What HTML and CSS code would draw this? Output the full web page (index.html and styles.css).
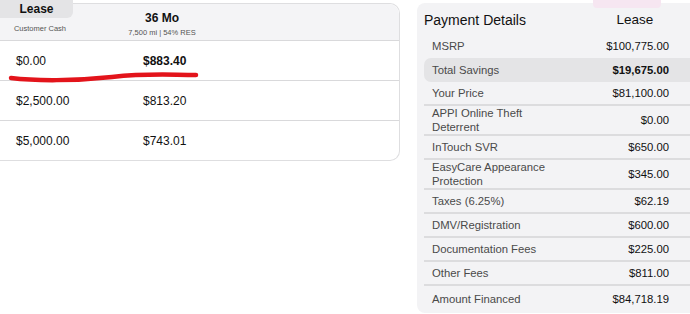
FILE: index.html
```html
<!DOCTYPE html>
<html lang="en">
<head>
    <meta charset="UTF-8">
    <meta name="viewport" content="width=device-width, initial-scale=1.0">
    <title>Lease Payment</title>
    <link rel="stylesheet" href="styles.css">
</head>
<body>
    <div class="page">
        <div class="lease-card">
            <div class="lease-head">
                <div class="head-cash">
                    <div class="tab">Lease</div>
                    <div class="sub">Customer Cash</div>
                </div>
                <div class="head-term">
                    <div class="term">36 Mo</div>
                    <div class="sub">7,500 mi | 54% RES</div>
                </div>
            </div>
            <div class="lease-row">
                <span class="cash">$0.00</span>
                <span class="pay bold">$883.40</span>
            </div>
            <div class="lease-row">
                <span class="cash">$2,500.00</span>
                <span class="pay">$813.20</span>
            </div>
            <div class="lease-row">
                <span class="cash">$5,000.00</span>
                <span class="pay">$743.01</span>
            </div>
            <svg class="scribble" width="210" height="90" viewBox="0 0 210 90">
                <path d="M11 77 C 35 80, 75 80, 112 76 S 170 74, 196 74" fill="none" stroke="#e3141b" stroke-width="4.5" stroke-linecap="round"/>
            </svg>
        </div>

        <div class="details">
            <div class="pink-tag"></div>
            <div class="details-head">
                <span class="title">Payment Details</span>
                <span class="col-title">Lease</span>
            </div>
            <div class="line first"><span class="label">MSRP</span><span class="value">$100,775.00</span></div>
            <div class="line savings"><span class="label">Total Savings</span><span class="value bold">$19,675.00</span></div>
            <div class="line"><span class="label">Your Price</span><span class="value">$81,100.00</span></div>
            <div class="line tall"><span class="label">APPI Online Theft<br>Deterrent</span><span class="value">$0.00</span></div>
            <div class="line"><span class="label">InTouch SVR</span><span class="value">$650.00</span></div>
            <div class="line tall"><span class="label">EasyCare Appearance<br>Protection</span><span class="value">$345.00</span></div>
            <div class="line"><span class="label">Taxes (6.25%)</span><span class="value">$62.19</span></div>
            <div class="line"><span class="label">DMV/Registration</span><span class="value">$600.00</span></div>
            <div class="line"><span class="label">Documentation Fees</span><span class="value">$225.00</span></div>
            <div class="line"><span class="label">Other Fees</span><span class="value">$811.00</span></div>
            <div class="line last"><span class="label">Amount Financed</span><span class="value">$84,718.19</span></div>
        </div>
    </div>
</body>
</html>
```

FILE: styles.css
```css
body {
    margin: 0;
    padding: 0;
    background-color: #ffffff;
    font-family: "Liberation Sans", Arial, sans-serif;
    color: #111;
}
.page {
    display: flex;
    align-items: flex-start;
    gap: 17px;
    padding-top: 3px;
}
.bold {
    font-weight: bold;
}

/* left lease grid */
.lease-card {
    position: relative;
    width: 399px;
    border: 1px solid #dedee0;
    border-left: none;
    border-radius: 0 10px 10px 0;
    background-color: #ffffff;
}
.lease-head {
    display: flex;
    height: 36px;
    background-color: #f4f4f6;
    border-radius: 0 10px 0 0;
    border-bottom: 1px solid #d9d9db;
}
.head-cash {
    width: 80px;
    margin-top: -4px;
}
.tab {
    width: 73px;
    height: 18px;
    line-height: 18px;
    background-color: #e4e4e6;
    border-radius: 0 0 6px 0;
    font-size: 12px;
    font-weight: bold;
    text-align: center;
}
.sub {
    font-size: 7.5px;
    color: #555;
    text-align: center;
    margin-top: 6px;
}
.head-term {
    width: 84px;
    margin-left: 40px;
    text-align: center;
    padding-top: 7px;
}
.term {
    font-size: 12px;
    font-weight: bold;
}
.head-term .sub {
    margin-top: 3px;
}
.lease-row {
    display: flex;
    align-items: center;
    height: 39px;
    border-bottom: 1px solid #d9d9db;
    font-size: 12px;
}
.lease-row:last-of-type {
    border-bottom: none;
}
.cash {
    width: 127px;
    padding-left: 16px;
}
.scribble {
    position: absolute;
    left: 0;
    top: -3px;
    pointer-events: none;
}

/* right payment details */
.details {
    position: relative;
    flex: 1;
    height: 310px;
    background-color: #f3f3f5;
    border-radius: 8px 0 0 8px;
    padding-left: 7px;
    box-sizing: border-box;
}
.pink-tag {
    position: absolute;
    left: 176px;
    top: -3px;
    width: 68px;
    height: 8px;
    background-color: #f6e6f1;
    border-radius: 0 0 4px 4px;
}
.details-head {
    display: flex;
    align-items: center;
    height: 29px;
    padding-top: 2px;
}
.title {
    flex: 1;
    font-size: 14px;
    color: #111;
}
.col-title {
    width: 70px;
    margin-right: 20px;
    text-align: center;
    font-size: 13.5px;
}
.line {
    display: flex;
    align-items: center;
    height: 22px;
    border-bottom: 2px solid #dcdcde;
    padding: 0 21px 0 8px;
    font-size: 11.3px;
}
.line .label {
    flex: 1;
    color: #4a4a4a;
    line-height: 14px;
}
.line .value {
    text-align: right;
}
.line.first,
.line.savings {
    border-bottom: none;
    height: 24px;
}
.line.savings {
    background-color: #e4e4e6;
    border-radius: 7px 0 0 7px;
}
.line.tall {
    height: 28px;
}
.line.last {
    border-bottom: none;
    height: 26px;
}
```
